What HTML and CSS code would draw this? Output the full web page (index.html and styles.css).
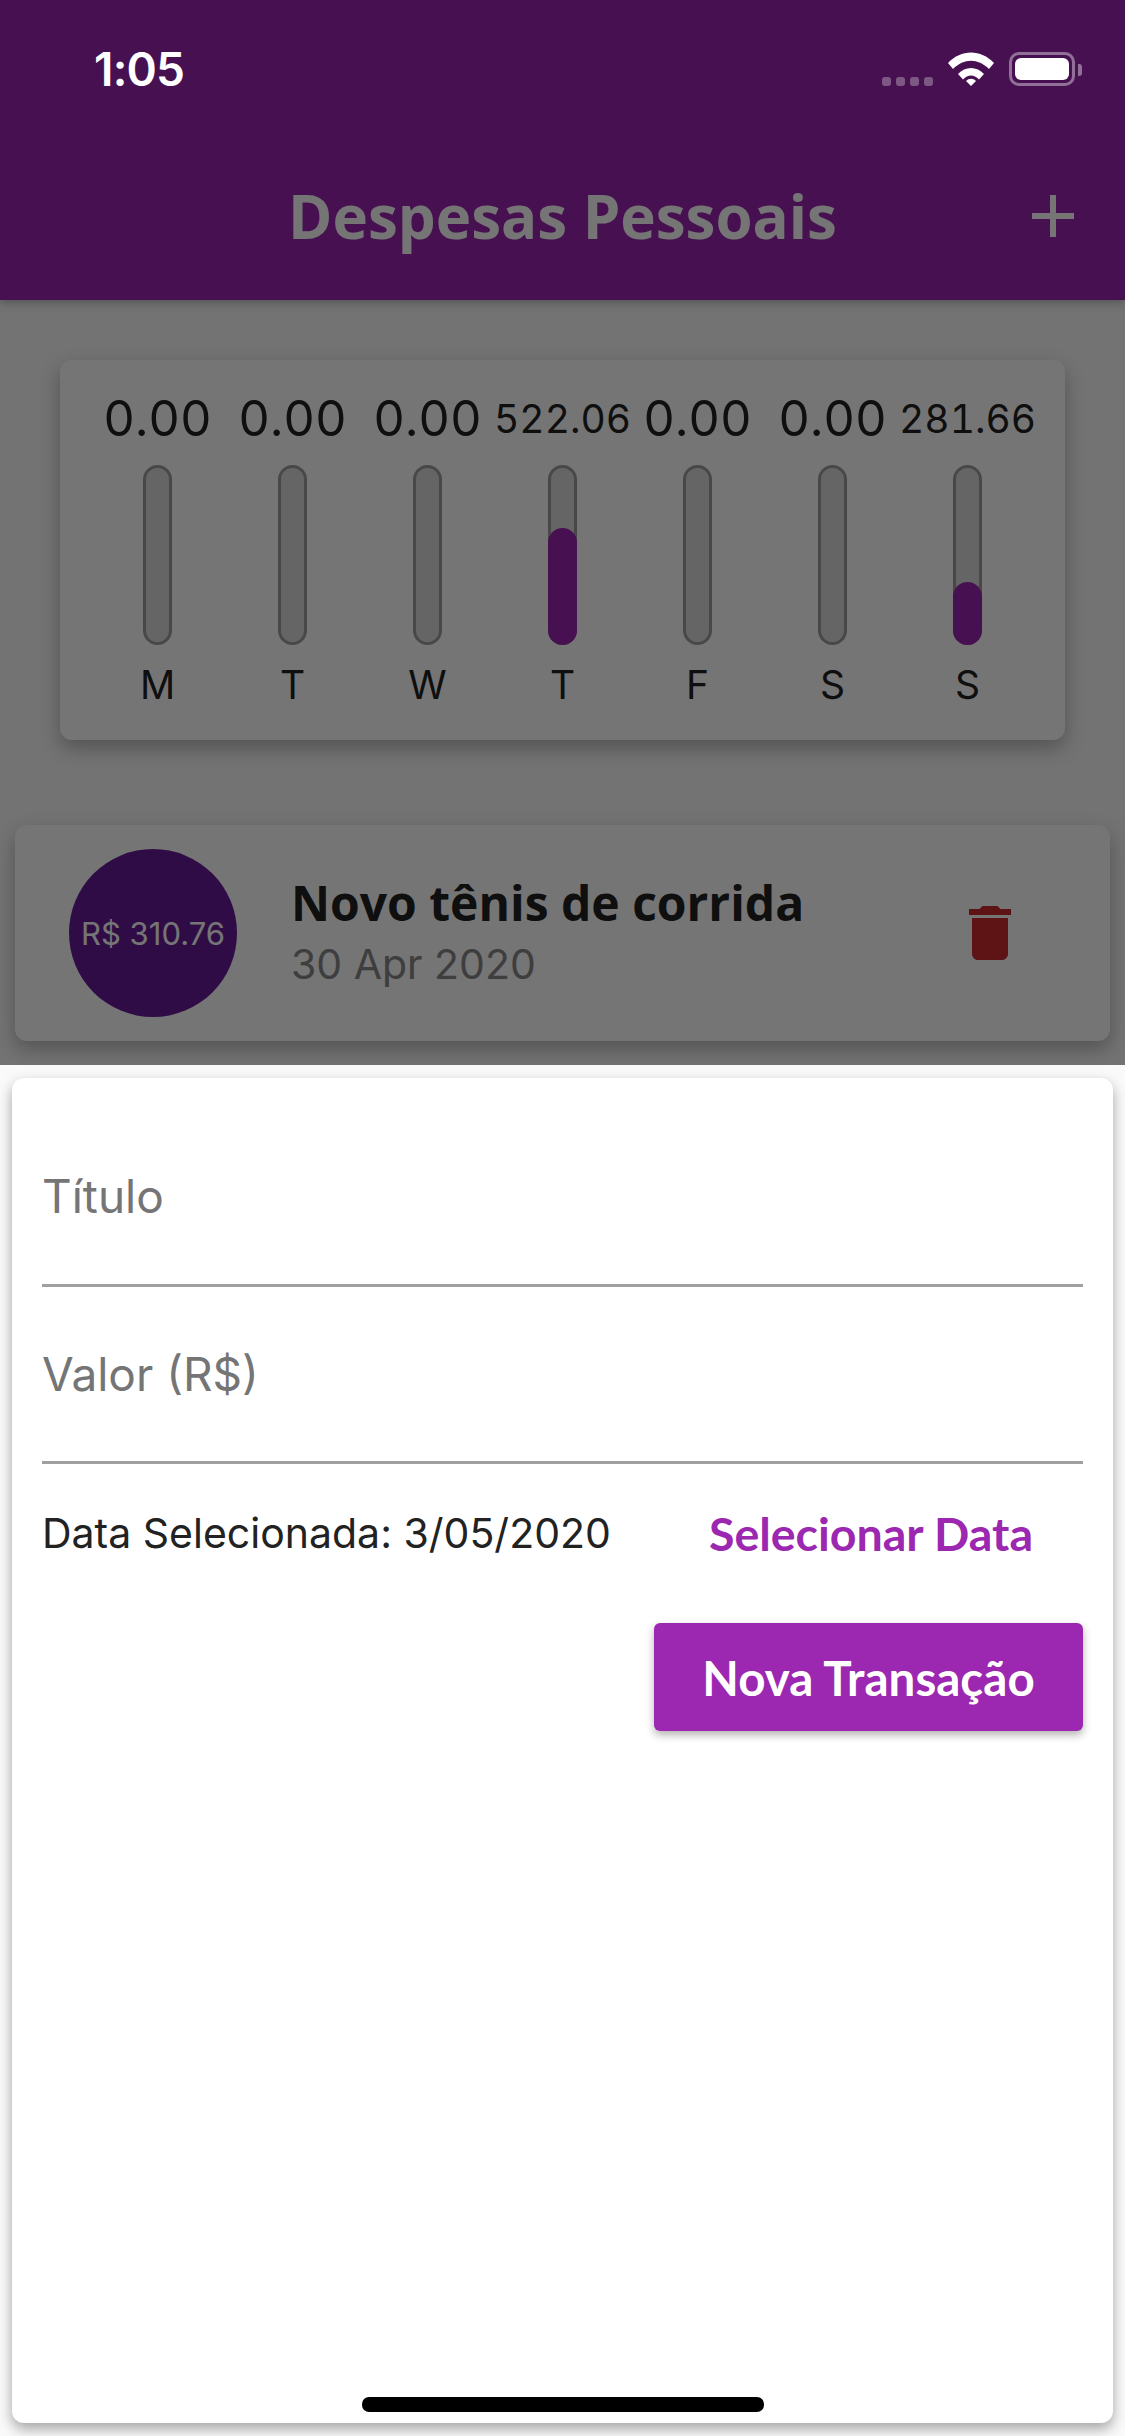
FILE: index.html
```html
<!DOCTYPE html>
<html lang="en">
<head>
	<meta charset="UTF-8">
	<title>Despesas Pessoais</title>
	<link rel="stylesheet" href="styles.css">
</head>
<body>
	<div class="phone">
		<div class="appBar">
			<h1>Despesas Pessoais</h1>
			<svg class="addIcon" viewBox="0 0 24 24"><path d="M19 13h-6v6h-2v-6H5v-2h6V5h2v6h6v2z"/></svg>
		</div>

		<div class="chart">
			<div class="day"><span class="value">0.00</span><div class="track"></div><span class="label">M</span></div>
			<div class="day"><span class="value">0.00</span><div class="track"></div><span class="label">T</span></div>
			<div class="day"><span class="value">0.00</span><div class="track"></div><span class="label">W</span></div>
			<div class="day"><span class="value small">522.06</span><div class="track"><div class="fill" style="height:67.2%"></div></div><span class="label">T</span></div>
			<div class="day"><span class="value">0.00</span><div class="track"></div><span class="label">F</span></div>
			<div class="day"><span class="value">0.00</span><div class="track"></div><span class="label">S</span></div>
			<div class="day"><span class="value small">281.66</span><div class="track"><div class="fill" style="height:36.2%"></div></div><span class="label">S</span></div>
		</div>

		<div class="transaction">
			<div class="amount">R$ 310.76</div>
			<div class="info">
				<div class="name">Novo tênis de corrida</div>
				<div class="date">30 Apr 2020</div>
			</div>
			<svg class="trash" viewBox="0 0 24 24"><path d="M6 19c0 1.1.9 2 2 2h8c1.1 0 2-.9 2-2V7H6v12zM19 4h-3.5l-1-1h-5l-1 1H5v2h14V4z"/></svg>
		</div>

		<div class="scrim"></div>

		<div class="statusBar">
			<span class="time">1:05</span>
			<div class="statusIcons">
				<div class="signal"><i></i><i></i><i></i><i></i></div>
				<svg class="wifi" viewBox="0 0 46 34"><path d="M0 11C13-3 33-3 46 11L41 17C30 6 16 6 5 17Z"/><path d="M10 22C17 14 29 14 36 22L31 27.5C26 22 20 22 15 27.5Z"/><path d="M18 29C21 26 25 26 28 29L23 34Z"/></svg>
				<div class="battery"><div class="charge"></div></div>
				<div class="batteryTip"></div>
			</div>
		</div>

		<div class="sheet">
			<div class="form">
				<div class="field">Título</div>
				<div class="field">Valor (R$)</div>
				<div class="dateRow">
					<span class="picked">Data Selecionada: 3/05/2020</span>
					<span class="pickDate">Selecionar Data</span>
				</div>
				<div class="actions"><button class="submit">Nova Transação</button></div>
			</div>
		</div>

		<div class="homeBar"></div>
	</div>
</body>
</html>
```

FILE: styles.css
```css
*{box-sizing:border-box;}
body{margin:0;font-family:Inter,"Noto Sans",sans-serif;}
.phone{position:relative;width:1125px;height:2436px;overflow:hidden;background:#fafafa;}

/* app bar */
.appBar{display:flex;justify-content:center;align-items:flex-end;position:relative;height:300px;padding-bottom:43px;background:#9c27b0;box-shadow:0 3px 8px rgba(0,0,0,.25);}
.appBar h1{margin:0;font-family:"Open Sans",sans-serif;font-size:60px;font-weight:700;line-height:82px;color:#fff;}
.addIcon{position:absolute;right:36px;top:180px;width:72px;height:72px;fill:#fff;}

/* chart */
.chart{display:flex;margin:60px 60px 0 60px;padding:0 30px;height:380px;border-radius:12px;background:#fff;box-shadow:0 8px 20px rgba(0,0,0,.28);}
.day{display:flex;flex-direction:column;align-items:center;flex:1;min-width:0;}
.value{height:105px;padding-top:30px;font-size:49px;line-height:58px;font-variant-numeric:tabular-nums;white-space:nowrap;color:#222;}
.value.small{font-size:39px;}
.track{display:flex;align-items:flex-end;width:29px;height:180px;border:3px solid #9e9e9e;border-radius:15px;background:#dcdcdc;}
.fill{flex:1;margin:0 -3px -3px;border-radius:15px;background:#9c27b0;}
.label{margin-top:16px;font-size:39px;line-height:48px;color:#222;}

/* transaction card */
.transaction{display:flex;align-items:center;margin:85px 15px 0;padding:0 84px 0 54px;height:216px;border-radius:12px;background:#fff;box-shadow:0 8px 20px rgba(0,0,0,.28);}
.amount{display:flex;justify-content:center;align-items:center;flex:none;width:168px;height:168px;border-radius:50%;background:#6a1b9a;color:#fff;font-size:31px;}
.info{flex:1;margin-left:54px;}
.name{margin-top:-4px;font-family:"Open Sans",sans-serif;font-size:48px;font-weight:700;line-height:62px;color:#222;}
.date{margin-top:4px;font-size:41px;line-height:52px;color:#888;}
.trash{flex:none;width:72px;height:72px;fill:#cc2c2c;}

.scrim{position:absolute;inset:0;background:rgba(0,0,0,.54);}

/* status bar */
.statusBar{display:flex;justify-content:space-between;align-items:flex-start;position:absolute;top:48px;left:0;right:0;padding:0 43px 0 94px;color:#fff;}
.time{font-size:46px;font-weight:600;line-height:42px;letter-spacing:-.8px;}
.statusIcons{display:flex;align-items:flex-end;height:38px;}
.signal{display:flex;gap:5px;margin:0 15px 0 0;}
.signal i{width:9px;height:9px;border-radius:3px;background:rgba(255,255,255,.3);}
.wifi{width:46px;height:34px;fill:#fff;}
.battery{margin-left:15px;padding:3px;width:66px;height:34px;border:3px solid rgba(255,255,255,.4);border-radius:10px;}
.charge{height:100%;border-radius:6px;background:#fff;}
.batteryTip{align-self:center;margin:6px 0 0 3px;width:4px;height:12px;border-radius:0 3px 3px 0;background:rgba(255,255,255,.4);}

/* bottom sheet */
.sheet{position:absolute;top:1065px;left:0;right:0;bottom:0;padding:13px 12px 13px;background:#fafafa;}
.form{height:100%;padding:0 30px;border-radius:12px;background:#fff;box-shadow:0 6px 14px rgba(0,0,0,.35);}
.field{display:flex;align-items:center;border-bottom:3px solid #a0a0a0;font-size:46px;color:#757575;}
.field:first-child{height:209px;padding-top:29px;}
.field + .field{height:177px;}
.dateRow{display:flex;justify-content:space-between;align-items:center;height:90px;margin-top:24px;}
.picked{font-size:41px;color:#222;}
.pickDate{margin-right:50px;font-family:Lato,sans-serif;font-size:46.5px;font-weight:700;color:#9c27b0;}
.actions{display:flex;justify-content:flex-end;margin-top:45px;}
.submit{width:429px;height:108px;border:none;border-radius:6px;background:#9c27b0;box-shadow:0 4px 8px rgba(0,0,0,.3);font-family:Lato,sans-serif;font-size:47.5px;font-weight:700;color:#fff;}

.homeBar{position:absolute;left:362px;bottom:24px;width:402px;height:15px;border-radius:7px;background:#000;}
```
